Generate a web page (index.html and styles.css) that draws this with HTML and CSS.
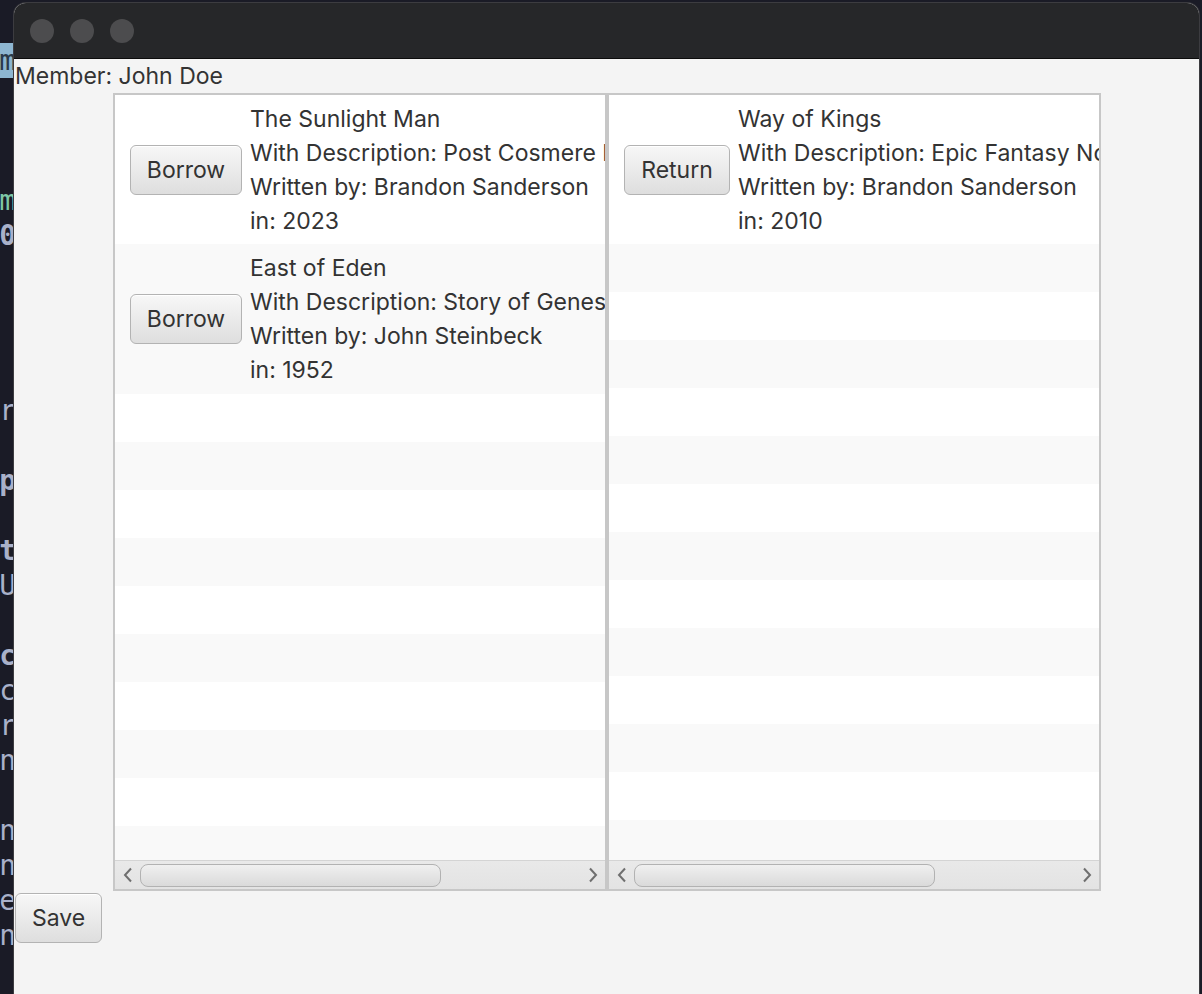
FILE: index.html
```html
<!DOCTYPE html>
<html>
<head>
<meta charset="utf-8">
<title>Library</title>
<link rel="stylesheet" href="styles.css">
</head>
<body>
<div class="desktop">
  <div class="tl hl"><span>m</span></div>
  <div class="tl"></div>
  <div class="tl"></div>
  <div class="tl"></div>
  <div class="tl teal"><span>m</span></div>
  <div class="tl bold"><span>0</span></div>
  <div class="tl"></div>
  <div class="tl dash"><span>-</span></div>
  <div class="tl"></div>
  <div class="tl"></div>
  <div class="tl"><span>.r</span></div>
  <div class="tl"></div>
  <div class="tl bold"><span>p</span></div>
  <div class="tl"></div>
  <div class="tl bold"><span>.t</span></div>
  <div class="tl"><span>U</span></div>
  <div class="tl"></div>
  <div class="tl bold"><span>c</span></div>
  <div class="tl"><span>.c</span></div>
  <div class="tl"><span>.r</span></div>
  <div class="tl"><span>-n</span></div>
  <div class="tl"></div>
  <div class="tl"><span>-n</span></div>
  <div class="tl"><span>-n</span></div>
  <div class="tl"><span>e</span></div>
  <div class="tl"><span>-n</span></div>
</div>

<div class="window">
  <div class="titlebar">
    <span class="light"></span>
    <span class="light"></span>
    <span class="light"></span>
  </div>
  <div class="content">
    <div class="member">Member: John Doe</div>
    <div class="lists">
      <div class="list">
        <div class="rows">
          <div class="row tall first">
            <button class="btn btn-borrow">Borrow</button>
            <div class="info">
              <div>The Sunlight Man</div>
              <div>With Description: Post Cosmere Book</div>
              <div>Written by: Brandon Sanderson</div>
              <div>in: 2023</div>
            </div>
          </div>
          <div class="row tall odd">
            <button class="btn btn-borrow">Borrow</button>
            <div class="info">
              <div>East of Eden</div>
              <div>With Description: Story of Genesis</div>
              <div>Written by: John Steinbeck</div>
              <div>in: 1952</div>
            </div>
          </div>
          <div class="row empty"></div>
          <div class="row empty odd"></div>
          <div class="row empty"></div>
          <div class="row empty odd"></div>
          <div class="row empty"></div>
          <div class="row empty odd"></div>
          <div class="row empty"></div>
          <div class="row empty odd"></div>
          <div class="row empty"></div>
          <div class="row empty odd"></div>
        </div>
        <div class="hscroll">
          <span class="arrow">
            <svg width="10" height="16" viewBox="0 0 10 16"><path d="M8 1.5 L2 8 L8 14.5" fill="none" stroke="#6f6f6f" stroke-width="2"/></svg>
          </span>
          <div class="track"><div class="thumb"></div></div>
          <span class="arrow">
            <svg width="10" height="16" viewBox="0 0 10 16"><path d="M2 1.5 L8 8 L2 14.5" fill="none" stroke="#6f6f6f" stroke-width="2"/></svg>
          </span>
        </div>
      </div>
      <div class="list">
        <div class="rows">
          <div class="row tall first">
            <button class="btn btn-return">Return</button>
            <div class="info">
              <div>Way of Kings</div>
              <div>With Description: Epic Fantasy Novel</div>
              <div>Written by: Brandon Sanderson</div>
              <div>in: 2010</div>
            </div>
          </div>
          <div class="row empty odd"></div>
          <div class="row empty"></div>
          <div class="row empty odd"></div>
          <div class="row empty"></div>
          <div class="row empty odd"></div>
          <div class="row empty"></div>
          <div class="row empty odd"></div>
          <div class="row empty"></div>
          <div class="row empty odd"></div>
          <div class="row empty"></div>
          <div class="row empty odd"></div>
          <div class="row empty"></div>
          <div class="row empty odd"></div>
        </div>
        <div class="hscroll">
          <span class="arrow">
            <svg width="10" height="16" viewBox="0 0 10 16"><path d="M8 1.5 L2 8 L8 14.5" fill="none" stroke="#6f6f6f" stroke-width="2"/></svg>
          </span>
          <div class="track"><div class="thumb"></div></div>
          <span class="arrow">
            <svg width="10" height="16" viewBox="0 0 10 16"><path d="M2 1.5 L8 8 L2 14.5" fill="none" stroke="#6f6f6f" stroke-width="2"/></svg>
          </span>
        </div>
      </div>
    </div>
    <button class="btn btn-save">Save</button>
  </div>
</div>
</body>
</html>
```

FILE: styles.css
```css
html, body {
  margin: 0;
  padding: 0;
  height: 100%;
  overflow: hidden;
}
body {
  background: #1a1b26;
  font-family: "Inter", "Liberation Sans", sans-serif;
}

/* desktop / terminal peeking out behind the window */
.desktop {
  padding-top: 43px;
  width: 14px;
  overflow: hidden;
  font-family: "DejaVu Sans Mono", monospace;
  font-size: 28px;
  color: #a9b1c9;
}
.tl {
  height: 35px;
  line-height: 35px;
  white-space: pre;
  display: flex;
  justify-content: flex-end;
  width: 14px;
}
.tl span {
  flex: none;
  margin-right: -2px;
}
.tl.hl {
  background: #8db6d1;
  color: #2a3a4a;
}
.tl.teal { color: #7ec7a6; }
.tl.bold { font-weight: bold; }
.tl.dash span { margin-right: 10px; }

/* window */
.window {
  position: absolute;
  left: 14px;
  top: 3px;
  width: 1185px;
  height: 1000px;
  border-radius: 12px 12px 0 0;
  overflow: hidden;
  background: #f4f4f4;
  box-shadow: 0 0 0 1px #3c3c40;
}
.titlebar {
  height: 55px;
  background: #262729;
  border-bottom: 1px solid #0c0c0c;
  display: flex;
  align-items: center;
  gap: 16px;
  padding-left: 16px;
}
.light {
  width: 24px;
  height: 24px;
  border-radius: 50%;
  background: #4c4c4e;
}

.content {
  background: #f4f4f4;
  color: #333333;
  font-size: 23px;
}
.member {
  height: 34px;
  line-height: 34px;
  padding-left: 1px;
  white-space: nowrap;
}
.lists {
  display: flex;
  margin-left: 99px;
  height: 798px;
}
.list {
  width: 494px;
  box-sizing: border-box;
  border: 2px solid #c7c7c7;
  background: #ffffff;
  display: flex;
  flex-direction: column;
  overflow: hidden;
}
.rows {
  flex: 1;
  overflow: hidden;
}
.row {
  display: flex;
  align-items: center;
  gap: 8px;
  padding: 0 15px;
  white-space: nowrap;
  box-sizing: border-box;
  background: #ffffff;
}
.row.odd { background: #f9f9f9; }
.row.tall { height: 150px; }
.row.tall.first { height: 149px; }
.row.empty { height: 48px; }
.info {
  line-height: 34px;
}

.btn {
  font-family: "Inter", "Liberation Sans", sans-serif;
  font-size: 23px;
  color: #333333;
  height: 50px;
  padding: 0;
  border: 1px solid #b3b3b3;
  border-radius: 6px;
  background: linear-gradient(#f7f7f7, #dedede);
  box-shadow: inset 0 1px 0 #ffffff;
  flex: none;
}
.btn-borrow { width: 112px; }
.btn-return { width: 106px; }
.btn-save {
  width: 87px;
  margin-top: 2px;
  margin-left: 1px;
  display: block;
}

.hscroll {
  height: 29px;
  box-sizing: border-box;
  border-top: 1px solid #d4d4d4;
  background: linear-gradient(#e9e9e9, #e3e3e3);
  display: flex;
  align-items: center;
  flex: none;
}
.arrow {
  width: 25px;
  height: 28px;
  display: flex;
  align-items: center;
  justify-content: center;
  flex: none;
}
.track {
  flex: 1;
  height: 28px;
  display: flex;
  align-items: center;
}
.thumb {
  width: 301px;
  height: 23px;
  box-sizing: border-box;
  border: 1px solid #b2b2b2;
  border-radius: 8px;
  background: linear-gradient(#f0f0f0, #dadada);
}
```
